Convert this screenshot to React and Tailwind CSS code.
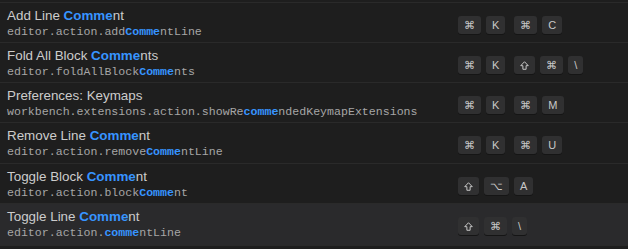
const rows = [
  {
    title: ["Add Line ", "Comme", "nt"],
    code: ["editor.action.add", "Comme", "ntLine"],
    keys: [["⌘", "K"], ["⌘", "C"]],
    h: "h-[40px]",
  },
  {
    title: ["Fold All Block ", "Comme", "nts"],
    code: ["editor.foldAllBlock", "Comme", "nts"],
    keys: [["⌘", "K"], ["shift", "⌘", "\\"]],
    h: "h-[40px]",
  },
  {
    title: ["Preferences: Keymaps", "", ""],
    code: ["workbench.extensions.action.showRe", "comme", "ndedKeymapExtensions"],
    keys: [["⌘", "K"], ["⌘", "M"]],
    h: "h-[40px]",
  },
  {
    title: ["Remove Line ", "Comme", "nt"],
    code: ["editor.action.remove", "Comme", "ntLine"],
    keys: [["⌘", "K"], ["⌘", "U"]],
    h: "h-[41px]",
  },
  {
    title: ["Toggle Block ", "Comme", "nt"],
    code: ["editor.action.block", "Comme", "nt"],
    keys: [["shift", "⌥", "A"]],
    h: "h-[40px]",
  },
  {
    title: ["Toggle Line ", "Comme", "nt"],
    code: ["editor.action.", "comme", "ntLine"],
    keys: [["shift", "⌘", "\\"]],
    h: "h-[42px]",
    selected: true,
  },
];

function Key({ k }) {
  return (
    <span className="flex h-[18px] items-center justify-center rounded-[3px] bg-[#303031] px-[6px] text-[11px] leading-none text-[#c8c8c8] shadow-[0_1px_0_#151515]">
      {k === "shift" ? (
        <svg width="9" height="9" viewBox="0 0 10 10" fill="none" stroke="#c8c8c8" strokeWidth="1.1">
          <path d="M5 0.8 L9.2 5.2 H6.8 V9.2 H3.2 V5.2 H0.8 Z" strokeLinejoin="round" />
        </svg>
      ) : (
        k
      )}
    </span>
  );
}

export default function App() {
  return (
    <div
      className="h-[249px] w-[628px] overflow-hidden bg-[#1e1e1e] pt-[2px]"
      style={{ fontFamily: '"Liberation Sans", Arial, sans-serif' }}
    >
      <div className="border-t border-[#2a2a2a]">
        {rows.map((r, i) => (
          <div
            key={i}
            className={
              "flex border-b border-[#2a2a2a] " +
              r.h +
              " " +
              (r.selected ? "bg-[#2a2a2c]" : "bg-[#1e1e1e]")
            }
          >
            <div className="w-[458px] shrink-0 pl-[7px] pt-[4px]">
              <div className="text-[13.4px] leading-[17px] text-[#cccccc]">
                {r.title[0]}
                <span className="font-bold text-[#3794ff]">{r.title[1]}</span>
                {r.title[2]}
              </div>
              <div
                className="whitespace-nowrap text-[11.6px] leading-[16px] text-[#a6a6a6]"
                style={{ fontFamily: '"Liberation Mono", monospace' }}
              >
                {r.code[0]}
                <span className="font-bold text-[#3794ff]">{r.code[1]}</span>
                {r.code[2]}
              </div>
            </div>
            <div className="flex items-start gap-[9px] pt-[13px]">
              {r.keys.map((chord, j) => (
                <div key={j} className="flex gap-[5px]">
                  {chord.map((k, m) => (
                    <Key key={m} k={k} />
                  ))}
                </div>
              ))}
            </div>
          </div>
        ))}
      </div>
    </div>
  );
}
